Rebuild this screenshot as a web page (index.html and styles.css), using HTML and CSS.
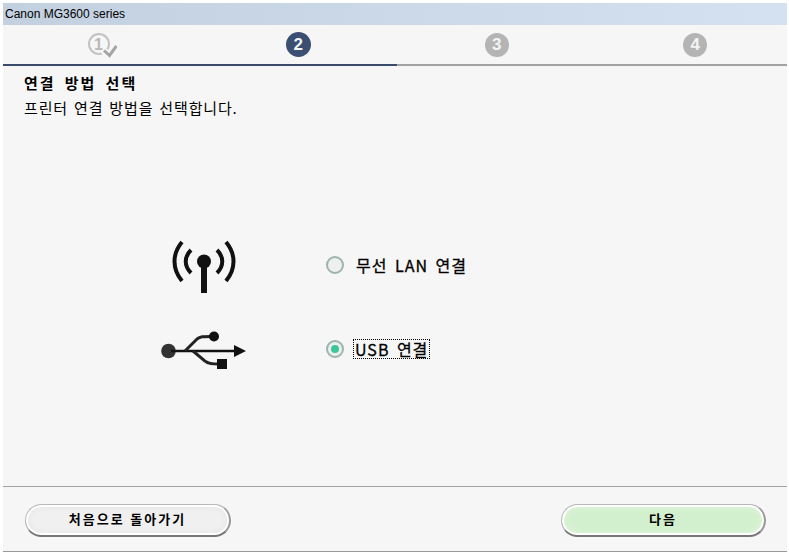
FILE: index.html
```html
<!DOCTYPE html>
<html lang="ko">
<head>
  <meta charset="UTF-8">
  <title>Canon MG3600 series</title>
  <link rel="stylesheet" href="styles.css">
</head>
<body>
  <div class="window">
    <div class="titlebar">Canon MG3600 series</div>

    <div class="steps">
      <div class="step">
        <svg width="32" height="28" viewBox="0 0 32 28">
          <circle cx="14" cy="13" r="10" fill="none" stroke="#c2c2c2" stroke-width="2"/>
          <text x="13.500" y="18.500" text-anchor="middle" class="step-done-num">1</text>
          <path d="M18 19l6.500 6 7.500-10" fill="none" stroke="#f6f6f6" stroke-width="7"/>
          <path d="M19 19.500l5.500 5 7-9.500" fill="none" stroke="#a4a4a4" stroke-width="3"/>
        </svg>
      </div>
      <div class="step"><span class="step-num current">2</span></div>
      <div class="step"><span class="step-num">3</span></div>
      <div class="step"><span class="step-num">4</span></div>
    </div>
    <div class="progress"><div class="progress-fill"></div></div>

    <div class="heading">
      <h1>연결 방법 선택</h1>
      <p>프린터 연결 방법을 선택합니다.</p>
    </div>

    <div class="options">
      <div class="option">
        <div class="option-icon">
          <svg width="66" height="58" viewBox="0 0 66 58">
            <g fill="none" stroke="#111" stroke-width="4">
              <path d="M11 3C1 15 1 30 11 42"/>
              <path d="M55 3C65 15 65 30 55 42"/>
              <path d="M20 11C13 18 13 27 20 34"/>
              <path d="M46 11C53 18 53 27 46 34"/>
            </g>
            <circle cx="33" cy="22.500" r="7" fill="#111"/>
            <rect x="30" y="25" width="6" height="29" fill="#111"/>
          </svg>
        </div>
        <span class="radio"></span>
        <span class="option-label">무선 LAN 연결</span>
      </div>
      <div class="option">
        <div class="option-icon">
          <svg width="86" height="42" viewBox="0 0 86 42">
            <circle cx="7.500" cy="20" r="7.300" fill="#333"/>
            <path d="M10 20H74" stroke="#111" stroke-width="2.500"/>
            <path d="M73 14L85 20 73 26Z" fill="#111"/>
            <path d="M24 20L36 8C39 5.500 42 5.500 50 5.500" fill="none" stroke="#222" stroke-width="3"/>
            <circle cx="53" cy="5.500" r="5" fill="#111"/>
            <path d="M32 20L44 30C47 33 52 33 58 33" fill="none" stroke="#222" stroke-width="3"/>
            <rect x="56" y="28" width="10" height="10" fill="#111"/>
          </svg>
        </div>
        <span class="radio checked"></span>
        <span class="option-label focused">USB 연결</span>
      </div>
    </div>

    <div class="footer">
      <button class="btn">처음으로 돌아가기</button>
      <button class="btn btn-next">다음</button>
    </div>
  </div>
</body>
</html>
```

FILE: styles.css
```css
html, body {
  margin: 0;
  height: 100%;
}
body {
  background: #fff;
  overflow: hidden;
  font-family: "Noto Sans CJK KR", "Liberation Sans", sans-serif;
  color: #000;
}
.window {
  box-sizing: border-box;
  height: 552px;
  padding: 3px 2px 0 3px;
  display: flex;
  flex-direction: column;
  background: #fff;
}
.titlebar {
  height: 22px;
  line-height: 22px;
  padding-left: 2px;
  font-family: "Liberation Sans", sans-serif;
  font-size: 12px;
  background: linear-gradient(to right, #c3d0df, #d3e1f0);
}

.steps {
  display: grid;
  grid-template-columns: 196px repeat(3, 198.5px);
  height: 39px;
  background: #f6f6f6;
}
.step {
  display: flex;
  align-items: center;
  justify-content: center;
}
.step-num {
  width: 24px;
  height: 24px;
  border-radius: 50%;
  background: #b4b4b4;
  color: #f4f4f4;
  font-family: "Liberation Sans", sans-serif;
  font-weight: bold;
  font-size: 17px;
  line-height: 24px;
  text-align: center;
}
.step-num.current {
  width: 25px;
  height: 25px;
  line-height: 25px;
  background: #3b4f73;
}
.step-done-num {
  font-family: "Liberation Sans", sans-serif;
  font-size: 16px;
  font-weight: bold;
  fill: #b8b8b8;
}
.progress {
  height: 2px;
  background: #a3a3a3;
}
.progress-fill {
  width: 394px;
  height: 2px;
  background: #3b4a69;
}

.heading {
  padding: 7px 0 0 21px;
  background: #f6f6f6;
}
.heading h1 {
  margin: 0;
  font-size: 15px;
  line-height: 20px;
  font-weight: bold;
  letter-spacing: 2px;
  word-spacing: 3px;
}
.heading p {
  margin: 5px 0 0;
  font-size: 15px;
  line-height: 20px;
  letter-spacing: 0.85px;
  word-spacing: 1px;
}

.options {
  flex: 1;
  background: #f6f6f6;
  padding-top: 105px;
}
.option {
  display: flex;
  align-items: center;
  height: 84px;
}
.option-icon {
  width: 244px;
  margin-left: 79px;
  padding-top: 6px;
  display: flex;
  justify-content: center;
}
.radio {
  box-sizing: border-box;
  width: 18px;
  height: 18px;
  margin-right: 10px;
  border-radius: 50%;
  border: 2px solid #9db3ae;
  background: #eef0f0;
  display: flex;
  align-items: center;
  justify-content: center;
}
.radio.checked::after {
  content: "";
  width: 8px;
  height: 8px;
  border-radius: 50%;
  background: #3ec59a;
}
.option-label {
  padding: 0 1px;
  font-size: 16px;
  line-height: 18px;
  letter-spacing: 1px;
  word-spacing: 2px;
  -webkit-text-stroke: 0.3px #000;
  border: 1px dotted transparent;
}
.option-label.focused {
  border-color: #000;
  margin-left: -1px;
}

.footer {
  flex: none;
  box-sizing: border-box;
  height: 66px;
  display: flex;
  justify-content: space-between;
  align-items: center;
  padding: 3px 21px 0 22px;
  background: #f6f6f6;
  border-top: 1px solid #a3a3a3;
  border-bottom: 1px solid #9a9a9a;
}
.btn {
  box-sizing: border-box;
  width: 206px;
  height: 33px;
  padding: 0 0 3px;
  border-radius: 17px;
  border: 1px solid #b8b8b8;
  border-bottom: 2px solid #777;
  border-right: 2px solid #999;
  box-shadow: inset 0 0 0 2px #fff, inset 0 0 6px 2px #e4e4e4;
  background: #f0f0f0;
  font-family: "Noto Sans CJK KR", sans-serif;
  font-size: 13px;
  font-weight: bold;
  letter-spacing: 2px;
  color: #000;
}
.btn-next {
  width: 205px;
  background: #d2f0cd;
  box-shadow: inset 0 0 0 2px #fff, inset 0 0 6px 2px #e3f5df;
}
```
